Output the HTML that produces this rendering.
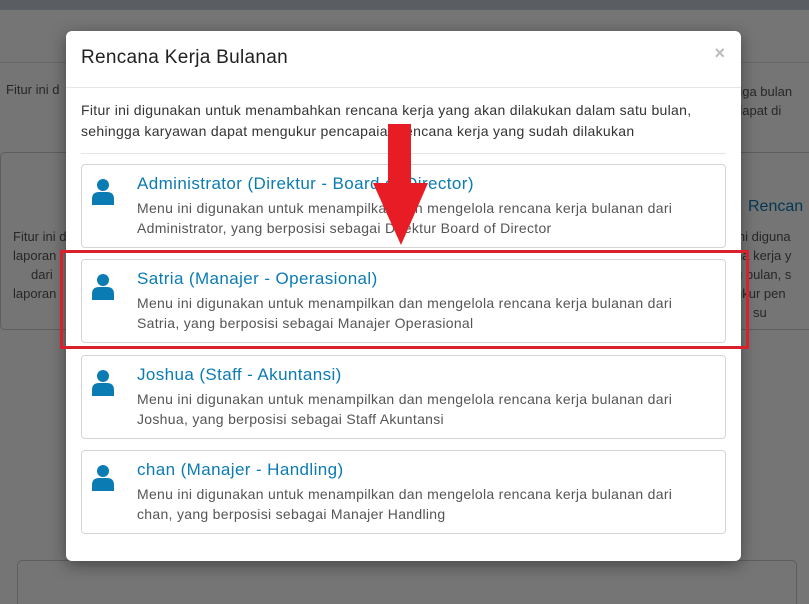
<!DOCTYPE html>
<html><head><style>
*{margin:0;padding:0;box-sizing:border-box}
html,body{width:809px;height:604px;overflow:hidden;background:#fff}
body{font-family:"Liberation Sans",sans-serif;position:relative}
.top{position:absolute;left:0;top:0;width:809px;height:10px;background:#c4ccd6}
.hl{position:absolute;left:0;top:62px;width:809px;height:1px;background:#e0e0e0}
.bgt{position:absolute;font-size:13px;color:#555;white-space:nowrap}
.bgc{position:absolute;border:1px solid #ccc;border-radius:5px}
.ov{position:absolute;left:0;top:0;width:809px;height:604px;background:rgba(0,0,0,0.54)}
.modal{position:absolute;left:66px;top:31px;width:675px;height:530px;background:#fff;border-radius:6px;box-shadow:0 4px 16px rgba(0,0,0,.4)}
.title{position:absolute;left:15px;top:16px;font-size:19px;letter-spacing:0.3px;color:#222}
.x{position:absolute;right:16px;top:12px;font-size:18px;color:#bbb;font-weight:bold}
.d1{position:absolute;left:0;top:56px;width:675px;height:1px;background:#e5e5e5}
.desc{position:absolute;left:15px;top:69px;font-size:14px;letter-spacing:0.3px;line-height:21px;color:#333;white-space:nowrap}
.d2{position:absolute;left:15px;top:122px;width:645px;height:1px;background:#e5e5e5}
.card{position:absolute;left:15px;width:645px;height:84px;border:1px solid #d5d5d5;border-radius:4px}
.card svg{position:absolute;left:9px;top:13px}
.card h4{position:absolute;left:55px;top:9px;font-size:17px;letter-spacing:0.4px;font-weight:normal;color:#0a7bb3;white-space:nowrap}
.card p{position:absolute;left:55px;top:33px;font-size:14px;letter-spacing:0.3px;line-height:20px;color:#555;white-space:nowrap}
.red{position:absolute;left:60px;top:250px;width:689px;height:99px;border:3px solid #d9212c}
</style></head><body>
<div class="top"></div><div class="hl"></div>
<div class="bgt" style="left:6px;top:82px">Fitur ini d</div>
<div class="bgc" style="left:0;top:152px;width:80px;height:178px"></div>
<div class="bgt" style="left:13px;top:227px;line-height:19px">Fitur ini d<br>laporan<br>&nbsp;&nbsp;&nbsp;&nbsp;&nbsp;dari<br>laporan</div>
<div class="bgt" style="left:735px;top:82px;line-height:19px">gga bulan<br>dapat di</div>
<div class="bgc" style="left:728px;top:152px;width:90px;height:178px"></div>
<div class="bgt" style="left:748px;top:198px;font-size:16px;color:#0a7bb3">Rencan</div>
<div class="bgt" style="left:735px;top:227px;line-height:19px">ini diguna<br>na kerja y<br>u bulan, s<br>ukur pen<br>&nbsp;&nbsp;&nbsp;&nbsp;&nbsp;su</div>
<div class="bgc" style="left:17px;top:560px;width:780px;height:60px"></div>
<div class="ov"></div>
<div class="modal">
<div class="title">Rencana Kerja Bulanan</div>
<div class="x">×</div>
<div class="d1"></div>
<div class="desc">Fitur ini digunakan untuk menambahkan rencana kerja yang akan dilakukan dalam satu bulan,<br>sehingga karyawan dapat mengukur pencapaian rencana kerja yang sudah dilakukan</div>
<div class="d2"></div>
<div class="card" style="top:133px"><svg width="24" height="28" viewBox="0 0 24 28"><circle cx="12" cy="7" r="6" fill="#0a7bb3"/><path d="M1 27 V21 Q1 14 8 14 H16 Q23 14 23 21 V27 Z" fill="#0a7bb3"/></svg><h4>Administrator (Direktur - Board of Director)</h4><p>Menu ini digunakan untuk menampilkan dan mengelola rencana kerja bulanan dari<br>Administrator, yang berposisi sebagai Direktur Board of Director</p></div>
<div class="card" style="top:228px"><svg width="24" height="28" viewBox="0 0 24 28"><circle cx="12" cy="7" r="6" fill="#0a7bb3"/><path d="M1 27 V21 Q1 14 8 14 H16 Q23 14 23 21 V27 Z" fill="#0a7bb3"/></svg><h4>Satria (Manajer - Operasional)</h4><p>Menu ini digunakan untuk menampilkan dan mengelola rencana kerja bulanan dari<br>Satria, yang berposisi sebagai Manajer Operasional</p></div>
<div class="card" style="top:324px"><svg width="24" height="28" viewBox="0 0 24 28"><circle cx="12" cy="7" r="6" fill="#0a7bb3"/><path d="M1 27 V21 Q1 14 8 14 H16 Q23 14 23 21 V27 Z" fill="#0a7bb3"/></svg><h4>Joshua (Staff - Akuntansi)</h4><p>Menu ini digunakan untuk menampilkan dan mengelola rencana kerja bulanan dari<br>Joshua, yang berposisi sebagai Staff Akuntansi</p></div>
<div class="card" style="top:419px"><svg width="24" height="28" viewBox="0 0 24 28"><circle cx="12" cy="7" r="6" fill="#0a7bb3"/><path d="M1 27 V21 Q1 14 8 14 H16 Q23 14 23 21 V27 Z" fill="#0a7bb3"/></svg><h4>chan (Manajer - Handling)</h4><p>Menu ini digunakan untuk menampilkan dan mengelola rencana kerja bulanan dari<br>chan, yang berposisi sebagai Manajer Handling</p></div>
</div>
<div class="red"></div>
<svg style="position:absolute;left:0;top:0" width="809" height="604"><path d="M388 124 H411 V183 H428 L401 245 L373 183 H388 Z" fill="#e81c24"/></svg>
</body></html>
